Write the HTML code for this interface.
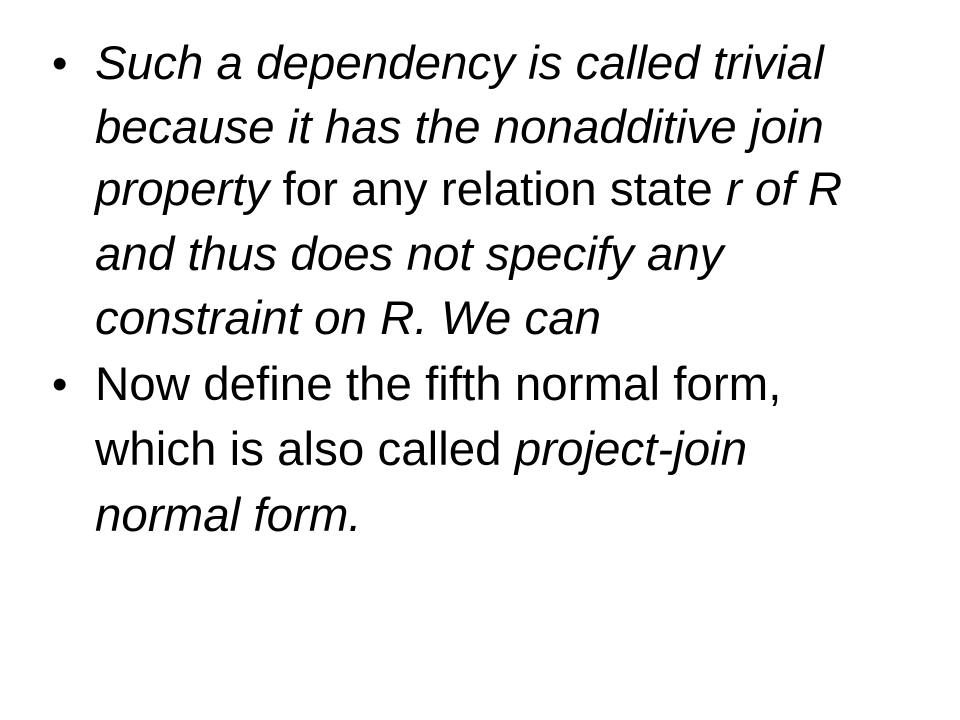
<!DOCTYPE html>
<html><head><meta charset="utf-8"><style>
html,body{margin:0;padding:0;background:#fff;}
body{width:960px;height:720px;position:relative;overflow:hidden;font-family:"Liberation Sans",sans-serif;color:#000;}
.l{position:absolute;left:95px;font-size:47.5px;line-height:48px;white-space:nowrap;}
.b{position:absolute;left:52px;font-size:44px;line-height:48px;}
i{font-style:italic;}
</style></head><body>
<div class="b" style="top:40px">•</div>
<div class="l" style="top:40px"><i>Such a dependency is called trivial</i></div>
<div class="l" style="top:104px"><i>because it has the nonadditive join</i></div>
<div class="l" style="top:166px"><i>property</i> for any relation state <i>r of R</i></div>
<div class="l" style="top:231px"><i>and thus does not specify any</i></div>
<div class="l" style="top:295px"><i>constraint on R. We can</i></div>
<div class="b" style="top:361px">•</div>
<div class="l" style="top:361px">Now define the fifth normal form,</div>
<div class="l" style="top:426px">which is also called <i>project-join</i></div>
<div class="l" style="top:492px"><i>normal form.</i></div>
</body></html>
